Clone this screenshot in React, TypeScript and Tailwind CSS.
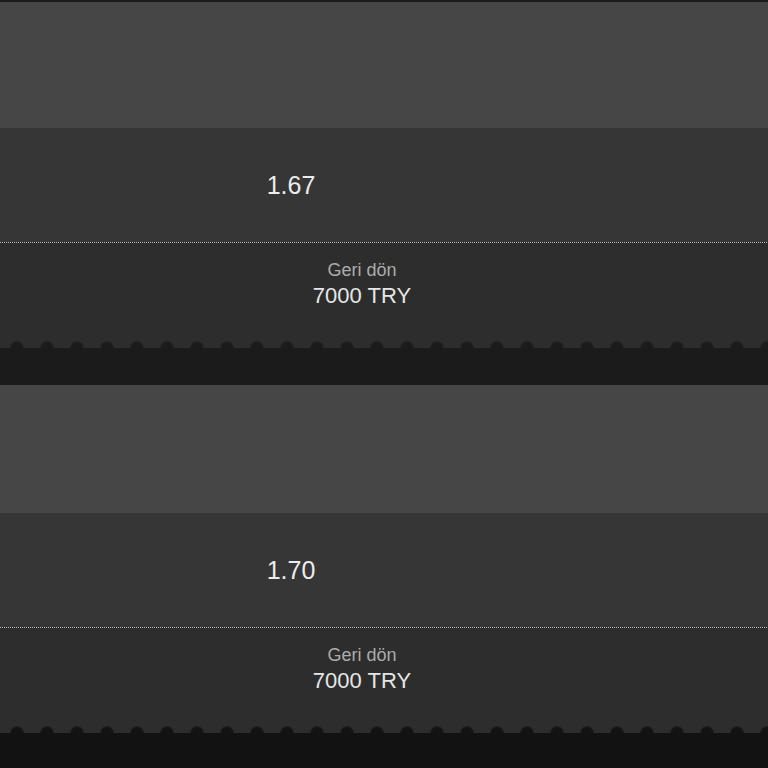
type Bet = { odds: string; label: string; amount: string };

const bets: Bet[] = [
  { odds: "1.67", label: "Geri dön", amount: "7000 TRY" },
  { odds: "1.70", label: "Geri dön", amount: "7000 TRY" },
];

function BetCard({ bet, top, scallop }: { bet: Bet; top: string; scallop: string }) {
  return (
    <div className="flex flex-col">
      <div className={`bg-[#464646] ${top}`} />
      <div className="h-[114px] bg-[#363636] flex items-center">
        <div className="w-[582px] text-center text-[25px] leading-none text-[#ececec]">{bet.odds}</div>
      </div>
      <div className="h-px bg-[#2d2d2d] bg-[image:repeating-linear-gradient(90deg,#bdbdbd_0_1px,transparent_1px_2px)]" />
      <div className="h-[105px] bg-[#2d2d2d] flex flex-col">
        <div className="w-[724px] pt-4 text-center">
          <div className="text-[18px] leading-[22px] text-[#acacac]">{bet.label}</div>
          <div className="text-[22px] leading-[30px] text-[#e6e6e6]">{bet.amount}</div>
        </div>
        <div className={`mt-auto h-[8px] bg-[length:30px_8px] bg-[position:2px_0] ${scallop}`} />
      </div>
    </div>
  );
}

export default function App() {
  return (
    <div className="h-[768px] w-[768px] overflow-hidden bg-[#121212] font-['Liberation_Sans',Arial,sans-serif]">
      <div className="h-[2px] bg-[#1c1c1c]" />
      <BetCard
        bet={bets[0]}
        top="h-[126px]"
        scallop="bg-[image:radial-gradient(circle_at_50%_100%,#1b1b1b_5.5px,transparent_7.5px)]"
      />
      <div className="h-[37px] bg-[#1b1b1b]" />
      <BetCard
        bet={bets[1]}
        top="h-[128px]"
        scallop="bg-[image:radial-gradient(circle_at_50%_100%,#131313_5.5px,transparent_7.5px)]"
      />
    </div>
  );
}
